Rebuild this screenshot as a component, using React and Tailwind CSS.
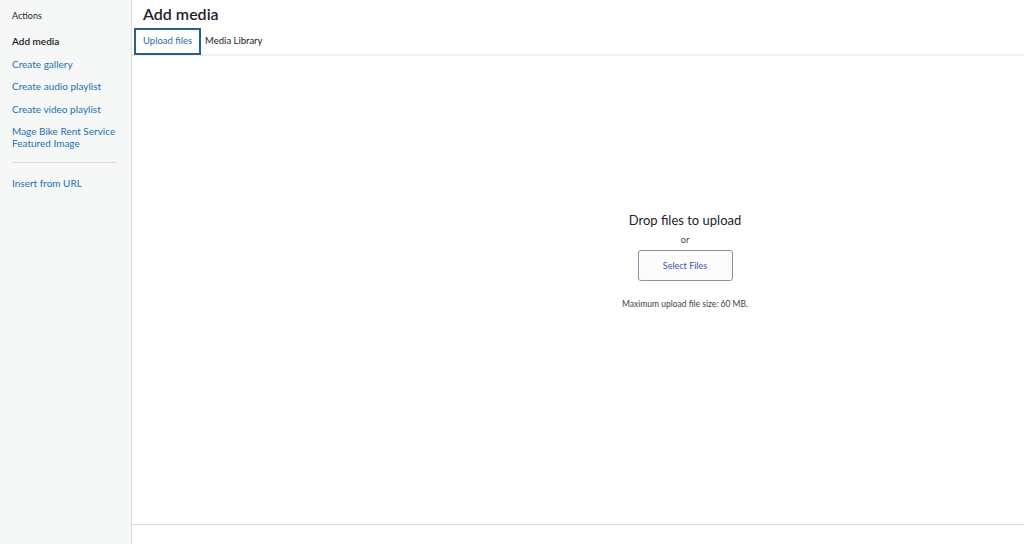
import React from "react";

const links = ["Create gallery", "Create audio playlist", "Create video playlist"];

function Sidebar() {
  return (
    <aside className="w-[132px] shrink-0 bg-[#f6f7f7] border-r border-[#dcdcde] h-full px-3 pt-[10px]">
      <h2 className="text-[9px] leading-[12px] text-[#1d2327]">Actions</h2>
      <nav className="mt-[13px] flex flex-col text-[10px] leading-[12px]">
        <span className="font-semibold text-[#1d2327]">Add media</span>
        {links.map((l) => (
          <a key={l} className="text-[#2271b1] mt-[10.5px]">
            {l}
          </a>
        ))}
        <a className="text-[#2271b1] mt-[10.5px]">
          Mage Bike Rent Service
          <br />
          Featured Image
        </a>
        <div className="mt-[13px] mr-[2px] border-t border-[#dcdcde]" />
        <a className="text-[#2271b1] mt-[14px]">Insert from URL</a>
      </nav>
    </aside>
  );
}

export default function App() {
  return (
    <div
      className="w-[1024px] h-[544px] flex bg-white overflow-hidden text-[#1d2327]"
      style={{ fontFamily: 'Lato, "Noto Sans", Arial, sans-serif' }}
    >
      <Sidebar />
      <main className="flex-1 flex flex-col overflow-hidden">
        <h1 className="pl-[11px] pt-[4px] text-[16px] leading-[20px] font-semibold text-[#1d2327]">
          Add media
        </h1>
        <div className="flex items-center h-[28px] mt-[4px] border-b-2 border-[#f0f0f1] text-[9.5px]">
          <button className="ml-[2px] h-[27px] px-[7px] border-2 border-[#2b5f8a] text-[#2271b1]">
            Upload files
          </button>
          <button className="px-[4px] text-[#1d2327]">Media Library</button>
        </div>
        <div className="flex-1 overflow-hidden">
          <div className="w-[1106px] flex flex-col items-center pt-[155px]">
            <p className="text-[13px] leading-[18px] text-[#1d2327]">Drop files to upload</p>
            <p className="mt-[6px] text-[9px] leading-[10px] text-[#3c434a]">or</p>
            <button className="mt-[5px] w-[95px] h-[31px] rounded-[3px] border border-[#8c8fa7] bg-[#fbfbfc] text-[9px] text-[#3858b9]">
              Select Files
            </button>
            <p className="mt-[18px] text-[8.5px] leading-[10px] text-[#3c434a]">
              Maximum upload file size: 60 MB.
            </p>
          </div>
        </div>
        <div className="h-[20px] shrink-0 border-t border-[#dcdcde]" />
      </main>
    </div>
  );
}
